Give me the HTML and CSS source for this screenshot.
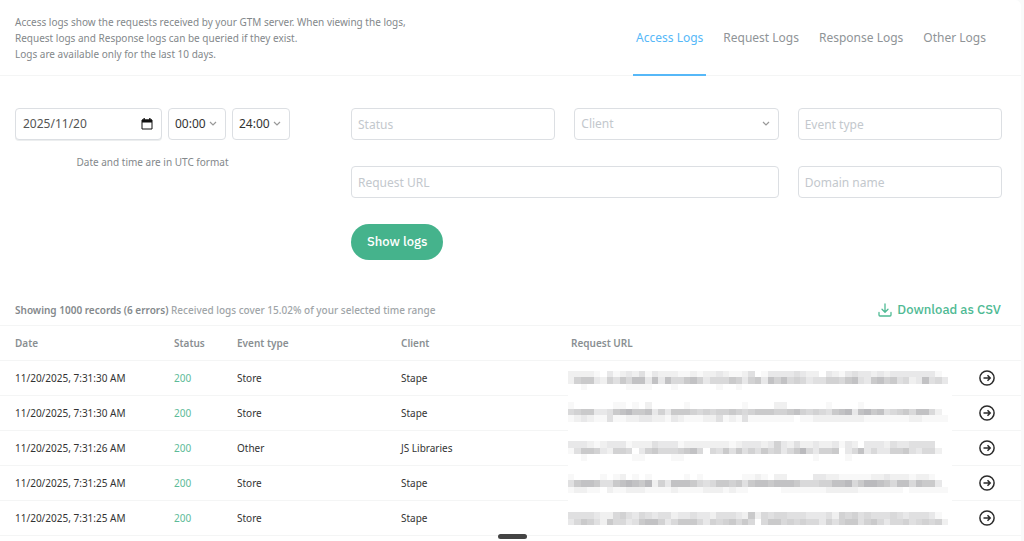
FILE: index.html
```html
<!DOCTYPE html>
<html lang="en">
<head>
    <meta charset="UTF-8">
    <meta name="viewport" content="width=device-width, initial-scale=1.0">
    <title>Access Logs</title>
    <link rel="stylesheet" href="styles.css">
</head>
<body>

    <main class="card">
        <header class="header">
            <p class="header__text">
                Access logs show the requests received by your GTM server. When viewing the logs,<br>
                Request logs and Response logs can be queried if they exist.<br>
                Logs are available only for the last 10 days.
            </p>
            <nav class="tabs">
                <a href="#access" class="tabs__link tabs__link--active">Access Logs</a>
                <a href="#request" class="tabs__link">Request Logs</a>
                <a href="#response" class="tabs__link">Response Logs</a>
                <a href="#other" class="tabs__link">Other Logs</a>
            </nav>
        </header>

        <form class="filters">
            <div class="period">
                <div class="period__fields">
                    <div class="date">
                        <input type="text" class="date__input" value="2025/11/20" aria-label="Date">
                        <button type="button" class="date__button" aria-label="Open calendar">
                            <svg viewBox="0 0 12 12" width="12" height="12">
                                <path d="M1 2h10v9H1z" fill="none" stroke="#111"/>
                                <path d="M1 1.5h10v3H1zM2.500 0h1.300v2H2.500zM8.200 0h1.300v2H8.200z" fill="#111"/>
                            </svg>
                        </button>
                    </div>
                    <select class="field select select--time" aria-label="From">
                        <option>00:00</option>
                    </select>
                    <select class="field select select--time" aria-label="To">
                        <option>24:00</option>
                    </select>
                </div>
                <p class="period__hint">Date and time are in UTC format</p>
            </div>

            <div class="fields">
                <input type="text" class="field" placeholder="Status" aria-label="Status">
                <select class="field select select--empty" aria-label="Client">
                    <option>Client</option>
                </select>
                <input type="text" class="field" placeholder="Event type" aria-label="Event type">
                <input type="text" class="field field--wide" placeholder="Request URL" aria-label="Request URL">
                <input type="text" class="field" placeholder="Domain name" aria-label="Domain name">
                <button type="submit" class="submit">Show logs</button>
            </div>
        </form>

        <div class="summary">
            <p class="summary__text"><strong>Showing 1000 records (6 errors)</strong> Received logs cover 15.02% of your selected time range</p>
            <a href="#csv" class="download">
                <svg viewBox="0 0 14 14" width="14" height="14" fill="none" stroke="currentColor" stroke-width="1.3" stroke-linecap="round" stroke-linejoin="round">
                    <path d="M7 1v8M4 6.300l3 3 3-3M1 9.500v2.500q0 1 1 1h10q1 0 1-1V9.500"/>
                </svg>
                Download as CSV
            </a>
        </div>

        <table class="logs">
            <thead>
                <tr>
                    <th class="logs__date">Date</th>
                    <th class="logs__status">Status</th>
                    <th class="logs__event">Event type</th>
                    <th class="logs__client">Client</th>
                    <th class="logs__url">Request URL</th>
                    <th class="logs__action"></th>
                </tr>
            </thead>
            <tbody id="logRows"></tbody>
        </table>
    </main>

    <div class="handle"></div>

    <script src="script.js"></script>
</body>
</html>
```
FILE: styles.css
```css
* {
    margin: 0;
    padding: 0;
    box-sizing: border-box;
}

body {
    background: #f9fafa;
    font-family: 'Noto Sans', 'Segoe UI', sans-serif;
    font-size: 10px;
    line-height: 16px;
    color: #333;
    padding-right: 3px;
    overflow: hidden;
}

input, select, button {
    font: inherit;
}

.card {
    background: #fff;
    border-top-right-radius: 6px;
    min-height: 100vh;
}

.header {
    display: flex;
    justify-content: space-between;
    height: 76px;
    padding: 0 32px 0 15px;
    border-bottom: 1px solid #f4f5f5;
}

.header__text {
    align-self: center;
    color: #83888b;
}

.tabs {
    display: flex;
    gap: 14px;
    margin-bottom: -1px;
}

.tabs__link {
    display: flex;
    align-items: center;
    padding: 2px 3px 0;
    border-bottom: 2px solid transparent;
    font-size: 12px;
    color: #8f9497;
    text-decoration: none;
}

.tabs__link--active {
    color: #56b8f8;
    border-color: #56b8f8;
}

.filters {
    display: flex;
    padding: 32px 19px 0 15px;
}

.period {
    width: 275px;
    min-width: 0;
    margin-right: 61px;
}

.period__fields {
    display: flex;
    gap: 6px;
}

.period__hint {
    margin-top: 14px;
    text-align: center;
    color: #83888b;
}

.field, .date {
    width: 100%;
    height: 32px;
    padding: 0 6px;
    border: 1px solid #dcdfe3;
    border-radius: 4px;
    background: #fff;
    font-size: 12px;
    color: #333;
    outline: none;
}

.field::placeholder {
    color: #c3c8cd;
}

.date {
    flex: 1;
    display: flex;
    align-items: center;
    min-width: 0;
    padding: 0 8px 0 7px;
    box-shadow: 0 1px 0 #eceeef;
}

.date__input {
    flex: 1;
    min-width: 0;
    border: none;
    background: none;
    color: #555;
    outline: none;
}

.date__button {
    display: flex;
    border: none;
    background: none;
    cursor: pointer;
}

.select {
    appearance: none;
    background: #fff url("data:image/svg+xml,%3Csvg xmlns='http://www.w3.org/2000/svg' width='8' height='6'%3E%3Cpath d='M1 1l3 3 3-3' fill='none' stroke='%23999' stroke-width='1.2'/%3E%3C/svg%3E") no-repeat right 8px center;
}

.select--time {
    flex: 0 0 58px;
}

.select--empty {
    color: #c3c8cd;
}

.fields {
    flex: 1;
    display: grid;
    grid-template-columns: repeat(3, minmax(0, 1fr));
    gap: 26px 19px;
}

.field--wide {
    grid-column: span 2;
}

.submit {
    justify-self: start;
    height: 36px;
    padding: 0 16px;
    border: none;
    border-radius: 18px;
    background: #45b38c;
    font-family: 'IBM Plex Sans', 'Noto Sans', sans-serif;
    font-size: 13px;
    font-weight: 500;
    color: #fff;
    cursor: pointer;
}

.summary {
    display: flex;
    justify-content: space-between;
    align-items: center;
    margin-top: 34px;
    height: 32px;
    padding: 0 20px 0 15px;
    border-bottom: 1px solid #f4f5f5;
}

.summary__text {
    color: #a0a5a8;
    font-weight: 500;
}

.summary__text strong {
    color: #84898c;
    font-weight: 600;
}

.download {
    display: flex;
    align-items: center;
    gap: 5px;
    font-family: 'IBM Plex Sans', 'Noto Sans', sans-serif;
    font-size: 13px;
    font-weight: 500;
    color: #4fba94;
    text-decoration: none;
}

.logs {
    width: 100%;
    table-layout: fixed;
    border-collapse: separate;
    border-spacing: 0;
}

.logs th, .logs td {
    height: 35px;
    border-bottom: 1px solid #f4f5f5;
    text-align: left;
    vertical-align: middle;
}

.logs th {
    font-weight: 600;
    color: #8a8f92;
}

.logs th:first-child, .logs td:first-child {
    padding-left: 15px;
}

.logs th.logs__url {
    padding-left: 3px;
}

.logs tr:not(:last-child) td.logs__url {
    border-bottom-color: transparent;
}

.logs__date { width: 174px; }
.logs__status { width: 63px; }
.logs__event { width: 164px; }
.logs__client { width: 167px; }
.logs__action { width: 69px; }

.logs td.logs__status {
    color: #5dbb98;
}

.mosaic {
    display: block;
    width: 99%;
    height: 28px;
}

.details {
    display: block;
    margin-left: 27px;
    width: 16px;
    height: 16px;
    border: none;
    background: none;
    cursor: pointer;
}

.details svg {
    display: block;
}

.handle {
    position: fixed;
    bottom: 2px;
    left: 50%;
    width: 29px;
    height: 5px;
    margin-left: -14px;
    border-radius: 3px;
    background: #444;
}
```
FILE: script.js
```javascript
// Each url is masked: rows of digits give the darkness of the blocks
const logs = [
    {
        date: "11/20/2025, 7:31:30 AM", event: "Store", client: "Stape", top: 10,
        mask: [
            "22221031232413222112122321124013333432203213433232333333310",
            "26773264758838385578635557636738685653446657843786745238453",
            "00100000011110001000000100100000000000000000000000000000000"
        ]
    },
    {
        date: "11/20/2025, 7:31:30 AM", event: "Store", client: "Stape", top: 5,
        mask: [
            "10000001101020000010000000010000220000001000010000000000000",
            "56773347897783637776565667656777667865654789389784567588520",
            "12321141122332213211122412141111111011222222221111111221111"
        ]
    },
    {
        date: "11/20/2025, 7:31:26 AM", event: "Other", client: "JS Libraries", top: 11,
        mask: [
            "33321233312224333122222221233323632422322313203332433444400",
            "14776326650367555678505474746475635795366703583533667435520",
            "00100000001100001100000000000000000000100001000000000000000"
        ]
    },
    {
        date: "11/20/2025, 7:31:25 AM", event: "Store", client: "Stape", top: 7,
        mask: [
            "10000101201010000010100000011210220000332211111223222122100",
            "47887447898792638887545776747887888755566889579987588587730",
            "12211021122211112111122212110000011111112222211111110111111"
        ]
    },
    {
        date: "11/20/2025, 7:31:25 AM", event: "Store", client: "Stape", top: 13,
        mask: [
            "44443225643543442334332444327254554443334265645444543444310",
            "35764275534788635777536567575057756565536467746753556456562",
            "00000000000000000000000000000000000000000000000000000000000"
        ]
    }
];

function mosaic(log) {
    let rects = "";
    log.mask.forEach((line, y) => {
        [...line].forEach((level, x) => {
            if (level > 0) {
                rects += `<rect x="${x * 10}" y="${log.top + y * 10}" width="10" height="10" fill="#181820" fill-opacity="${level * 0.033}"/>`;
            }
        });
    });
    return `<svg class="mosaic" viewBox="0 0 590 43" preserveAspectRatio="none" shape-rendering="crispEdges" aria-hidden="true">${rects}</svg>`;
}

document.getElementById("logRows").innerHTML = logs.map(log => `
    <tr>
        <td>${log.date}</td>
        <td class="logs__status">200</td>
        <td>${log.event}</td>
        <td>${log.client}</td>
        <td class="logs__url">${mosaic(log)}</td>
        <td>
            <button type="button" class="details" aria-label="Details">
                <svg viewBox="0 0 16 16" width="16" height="16" fill="none" stroke="#2b2b2b" stroke-width="1.5">
                    <circle cx="8" cy="8" r="7.100"/>
                    <path d="M4.500 8h6.500M8.500 5.300L11.200 8l-2.700 2.700"/>
                </svg>
            </button>
        </td>
    </tr>`).join("");
```
